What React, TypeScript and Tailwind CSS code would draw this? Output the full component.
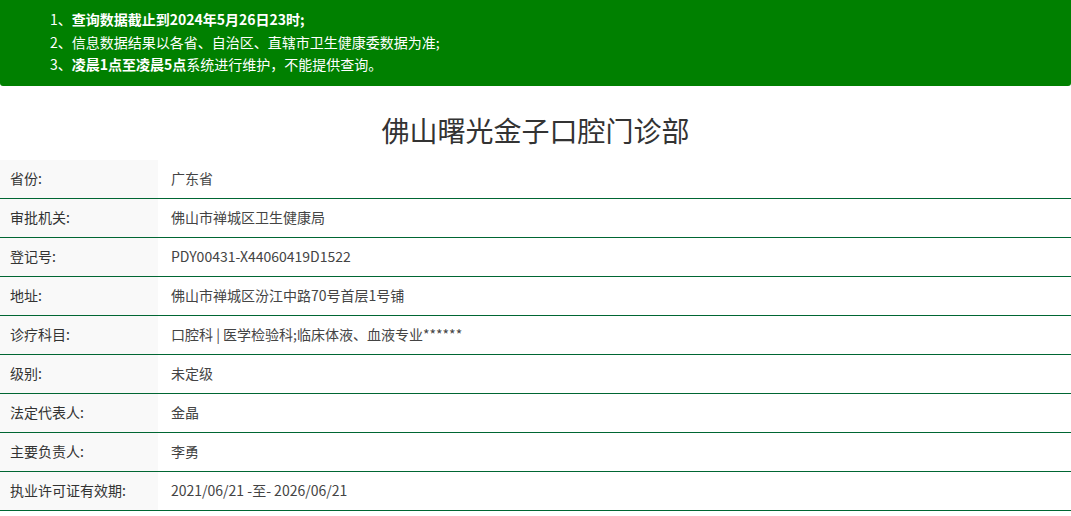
const rows: [string, string][] = [
    ['省份:', '广东省'],
    ['审批机关:', '佛山市禅城区卫生健康局'],
    ['登记号:', 'PDY00431-X44060419D1522'],
    ['地址:', '佛山市禅城区汾江中路70号首层1号铺'],
    ['诊疗科目:', '口腔科 | 医学检验科;临床体液、血液专业******'],
    ['级别:', '未定级'],
    ['法定代表人:', '金晶'],
    ['主要负责人:', '李勇'],
    ['执业许可证有效期:', '2021/06/21 -至- 2026/06/21'],
];

export default function App() {
    return (
        <div
            className="min-h-screen bg-white text-[#333]"
            style={{ fontFamily: '"Microsoft YaHei", "Noto Sans CJK SC", sans-serif' }}
        >
            {/* notice */}
            <div className="bg-[#008000] rounded-b-[3px] pt-2 pb-[10px] pl-[50px] text-white text-[14px] leading-[22.5px]">
                <p>
                    1、<b>查询数据截止到2024年5月26日23时;</b>
                </p>
                <p>2、信息数据结果以各省、自治区、直辖市卫生健康委数据为准;</p>
                <p>
                    3、<b>凌晨1点至凌晨5点</b>系统进行维护，不能提供查询。
                </p>
            </div>

            <h1 className="pt-[23px] pb-[9px] text-center text-[28px] leading-[42px] font-normal">
                佛山曙光金子口腔门诊部
            </h1>

            <div>
                {rows.map(([label, value]) => (
                    <div
                        key={label}
                        className="grid grid-cols-[158px_1fr] border-b border-[#006633] text-[14px] h-[39px]"
                    >
                        <div className="bg-[#f9f9f9] pl-[10px] flex items-center">
                            {label}
                        </div>
                        <div className="pl-[13px] flex items-center text-[#444]">{value}</div>
                    </div>
                ))}
            </div>
        </div>
    );
}
